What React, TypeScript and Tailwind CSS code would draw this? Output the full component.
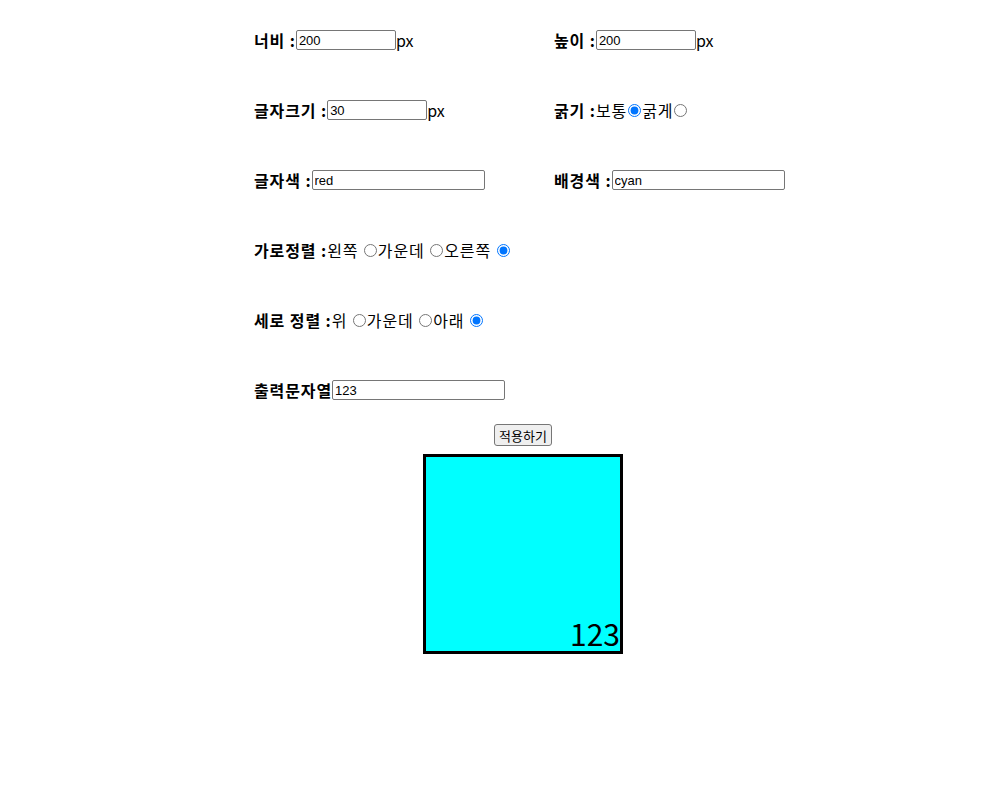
import React from 'react';

const kr = "font-['Malgun_Gothic','Noto_Sans_CJK_KR',sans-serif]";
const inputBase =
  "h-[20px] border border-[#767676] rounded-[2px] px-[2px] bg-white text-[13px] leading-none tracking-normal text-black font-['Liberation_Sans',Arial,sans-serif] outline-none";

function Radio({ name, checked }: { name: string; checked?: boolean }) {
  return (
    <input
      type="radio"
      name={name}
      defaultChecked={checked}
      className="w-[13px] h-[13px] mx-[1px] align-middle"
    />
  );
}

export default function App() {
  return (
    <div className={`min-h-screen bg-white text-black text-[16px] tracking-[0.9px] ${kr}`}>
      <div className="ml-[254px] w-[538px] pt-[5px]">
        {/* 크기 / 글자 설정 */}
        <div className="grid grid-cols-[300px_1fr]">
          <div className="h-[70px] flex items-center">
            <b>너비 :</b>
            <input type="text" defaultValue="200" className={`${inputBase} w-[100px]`} />
            <span className="tracking-normal">px</span>
          </div>
          <div className="h-[70px] flex items-center">
            <b>높이 :</b>
            <input type="text" defaultValue="200" className={`${inputBase} w-[100px]`} />
            <span className="tracking-normal">px</span>
          </div>

          <div className="h-[70px] flex items-center">
            <b>글자크기 :</b>
            <input type="text" defaultValue="30" className={`${inputBase} w-[100px]`} />
            <span className="tracking-normal">px</span>
          </div>
          <div className="h-[70px] flex items-center whitespace-pre">
            <b>굵기 :</b>
            <span>보통</span>
            <Radio name="weight" checked />
            <span>굵게</span>
            <Radio name="weight" />
          </div>

          <div className="h-[70px] flex items-center">
            <b>글자색 :</b>
            <input type="text" defaultValue="red" className={`${inputBase} w-[173px]`} />
          </div>
          <div className="h-[70px] flex items-center">
            <b>배경색 :</b>
            <input type="text" defaultValue="cyan" className={`${inputBase} w-[173px]`} />
          </div>
        </div>

        <div className="h-[70px] flex items-center whitespace-pre">
          <b>가로정렬 :</b>
          <span>왼쪽 </span>
          <Radio name="halign" />
          <span>가운데 </span>
          <Radio name="halign" />
          <span>오른쪽 </span>
          <Radio name="halign" checked />
        </div>

        <div className="h-[70px] flex items-center whitespace-pre">
          <b>세로 정렬 :</b>
          <span>위 </span>
          <Radio name="valign" />
          <span>가운데 </span>
          <Radio name="valign" />
          <span>아래 </span>
          <Radio name="valign" checked />
        </div>

        <div className="h-[70px] flex items-center">
          <b>출력문자열</b>
          <input type="text" defaultValue="123" className={`${inputBase} w-[173px]`} />
        </div>

        {/* 적용 + 미리보기 */}
        <div className="flex flex-col items-center tracking-normal">
          <button
            type="button"
            className="-mt-[1px] h-[22px] px-[4px] border border-[#767676] rounded-[3px] bg-[#efefef] text-[13px] leading-none text-black"
          >
            적용하기
          </button>
          <div className="mt-[8px] w-[200px] h-[200px] border-[3px] border-black bg-[#00ffff] flex items-end justify-end">
            <span className="text-[30px] leading-[36px]">123</span>
          </div>
        </div>
      </div>
    </div>
  );
}
